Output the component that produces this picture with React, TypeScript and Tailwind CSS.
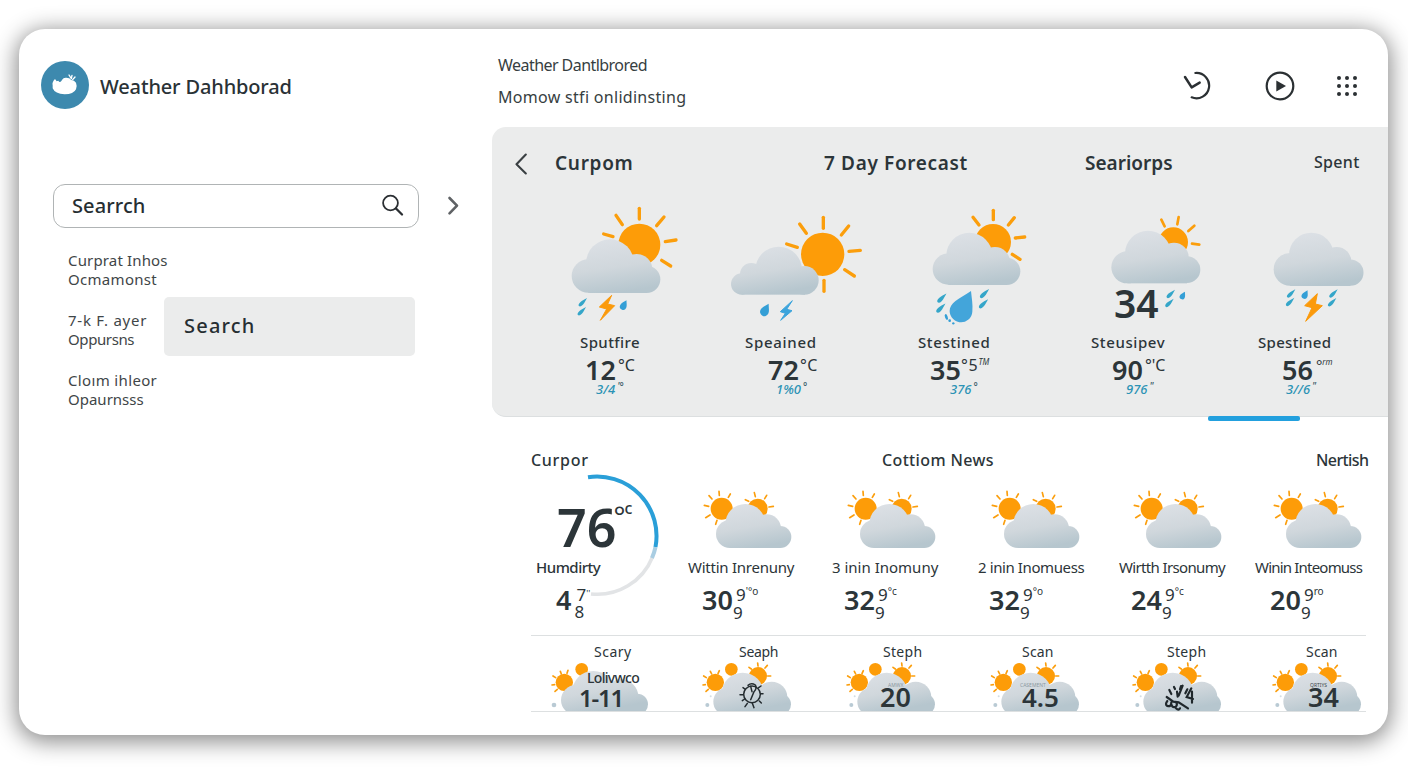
import React from "react";

type Circle = [number, number, number];
type Line = [number, number, number, number];

const Sun = ({ c, rays, w }: { c: Circle; rays: Line[]; w: number }) => (
  <g>
    <circle cx={c[0]} cy={c[1]} r={c[2]} fill="#fd9c08" />
    {rays.map((r, i) => (
      <line key={i} x1={r[0]} y1={r[1]} x2={r[2]} y2={r[3]} stroke="#fb9e0c" strokeWidth={w} strokeLinecap="round" />
    ))}
  </g>
);

const Cloud = ({ id, parts, base }: { id: string; parts: Circle[]; base: Line }) => {
  const top = Math.min(...parts.map((p) => p[1] - p[2]));
  return (
    <g fill={`url(#${id})`}>
      <linearGradient id={id} gradientUnits="userSpaceOnUse" x1={base[0]} y1={top} x2={base[0] + 25} y2={base[3] + 8}>
        <stop offset="0" stopColor="#dde1e6" />
        <stop offset="0.55" stopColor="#d0d7dc" />
        <stop offset="1" stopColor="#b6c6ce" />
      </linearGradient>
      {parts.map((p, i) => (
        <circle key={i} cx={p[0]} cy={p[1]} r={p[2]} />
      ))}
      <rect x={base[0]} y={base[1]} width={base[2] - base[0]} height={base[3] - base[1]} />
    </g>
  );
};

const Drop = ({ x, y, s, thin = false }: { x: number; y: number; s: number; thin?: boolean }) => (
  <path
    d="M0-1.8C.35-1.1 1-.4 1 .3A1 1 0 1 1-1 .3C-1-.4-.35-1.1 0-1.8Z"
    transform={`translate(${x} ${y}) rotate(${thin ? 45 : 28}) scale(${thin ? s * 0.5 : s} ${s})`}
    fill={thin ? "#35a6c9" : "#349fd6"}
  />
);

const Bolt = ({ points, color }: { points: string; color: string }) => (
  <polygon points={points} fill={color} stroke={color} strokeWidth="3" strokeLinejoin="round" />
);

const stormSun = (
  <>
    <Sun w={10} c={[268, 149, 63]} rays={[[268, 40, 268, 72], [198, 61, 217, 89], [342, 66, 320, 92], [161, 117, 189, 125], [346, 140, 378, 135], [335, 196, 362, 213]]} />
    <Cloud id="f1" parts={[[180, 205, 72], [115, 243, 50], [260, 224, 47], [290, 253, 41]]} base={[115, 235, 290, 294]} />
    <Bolt color="#fb9a0b" points="185,301 148,336 170,342 151,376 194,332 173,327" />
    <Drop thin x={97} y={323} s={11} />
    <Drop thin x={94} y={350} s={11} />
    <Drop x={221} y={332} s={10} />
  </>
);
const bigSun = (
  <>
    <Sun w={10} c={[818, 178, 65]} rays={[[820, 67, 820, 100], [749, 87, 769, 115], [896, 93, 874, 120], [710, 147, 742, 157], [897, 169, 931, 166], [884, 224, 913, 243], [822, 256, 822, 289]]} />
    <Cloud id="f2" parts={[[686, 225, 70], [604, 238, 34], [575, 267, 32], [763, 256, 43]]} base={[575, 240, 765, 299]} />
    <Drop x={645} y={347} s={13} />
    <Bolt color="#3ba4dc" points="727,317 691,350 706,355 692,376 726,347 710,343" />
  </>
);
const heavyDrop = (
  <>
    <Sun w={10} c={[279, 141, 54]} rays={[[280, 46, 280, 74], [219, 67, 237, 90], [343, 68, 325, 90], [346, 129, 374, 126], [337, 178, 360, 193]]} />
    <Cloud id="f3" parts={[[208, 182, 69], [145, 222, 47], [285, 201, 45], [320, 229, 41]]} base={[145, 215, 320, 270]} />
    <path d="M213 288C215 310 219 328 217 350A34 34 0 1 1 150 340C156 318 190 305 213 288Z" fill="#43a5da" />
    <Drop thin x={124} y={311} s={12} />
    <Drop thin x={121} y={341} s={12} />
    <Drop thin x={252} y={297} s={12} />
    <Drop thin x={249} y={328} s={12} />
    <ellipse cx="139" cy="366" rx="4" ry="9" transform="rotate(-20 139 366)" fill="#349fd6" />
    <circle cx="149" cy="377" r="4" fill="#349fd6" />
    <circle cx="160" cy="385" r="3.5" fill="#349fd6" />
  </>
);
const lightRain = (
  <>
    <Sun w={8} c={[820, 141, 44]} rays={[[784, 74, 794, 94], [836, 66, 832, 88], [883, 92, 865, 108], [876, 146, 898, 149]]} />
    <Cloud id="f4" parts={[[744, 176, 69], [682, 217, 48], [822, 187, 44], [861, 224, 40]]} base={[682, 210, 861, 265]} />
    <Drop thin x={811} y={298} s={11} />
    <Drop thin x={807} y={325} s={11} />
    <Drop x={848} y={303} s={8} />
  </>
);
const thunder = (
  <>
    <Cloud id="f5" parts={[[394, 180, 67], [330, 223, 49], [470, 200, 44], [511, 233, 39.5]]} base={[330, 215, 511, 273]} />
    <Drop thin x={332} y={297} s={11} />
    <Drop thin x={329} y={322} s={11} />
    <Drop thin x={459} y={297} s={11} />
    <Drop thin x={455} y={323} s={11} />
    <Drop x={375} y={300} s={9} />
    <Bolt color="#fb9a0b" points="412,296 374,332 396,338 377,379 427,332 406,327" />
  </>
);

const forecast = [
  { col: "w-[170px]", view: "-78 15 510 375", art: stormSun, name: "Sputfire", nameCls: "pl-[56px] tracking-[0.4px]", temp: "12", unit: "°C", unitCls: "text-[16px] pl-[2px]", tempPad: "pl-[61px]", sub: "3/4", subUnit: "'°", subPad: "pl-[72px]" },
  { col: "w-[174px]", view: "432 15 522 375", art: bigSun, name: "Speained", nameCls: "pl-[51px] tracking-[0.7px]", temp: "72", unit: "°C", unitCls: "text-[16px] pl-[1px] tracking-[0.5px]", tempPad: "pl-[74px]", sub: "1%0", subUnit: "°", subPad: "pl-[82px]" },
  { col: "w-[172px]", view: "-96 15 516 375", art: heavyDrop, name: "Stestined", nameCls: "pl-[50px] tracking-[0.6px]", temp: "35", unit: "°5", unitCls: "text-[16px] tracking-[0.8px]", tiny: "TM", tempPad: "pl-[62px]", sub: "376", subUnit: "°", subPad: "pl-[82px]" },
  { col: "w-[176px]", view: "420 15 528 375", art: lightRain, name: "Steusipev", nameCls: "pl-[51px] tracking-[0.6px]", temp: "90", unit: "°'C", unitCls: "text-[16px] pl-[2px]", tempPad: "pl-[72px]", sub: "976", subUnit: "\"", subPad: "pl-[86px]", big: "34" },
  { col: "w-[156px]", view: "108 15 468 375", art: thunder, name: "Spestined", nameCls: "pl-[42px] tracking-[0.3px]", temp: "56", unit: "°", unitCls: "text-[15px] pl-[3px]", tiny: "rm", tempPad: "pl-[66px]", sub: "3//6", subUnit: "\"", subPad: "pl-[70px]" },
];

const DuoArt = ({ id }: { id: string }) => (
  <svg viewBox="510 135 432 195" className="h-[65px] w-[144px] shrink-0">
    <Sun w={5} c={[635, 206, 33]} rays={[[627, 154, 628, 166], [661, 162, 655, 172], [597, 167, 606, 177], [583, 196, 596, 199], [587, 233, 600, 225], [621, 241, 617, 253]]} />
    <Sun w={5} c={[743, 206, 30]} rays={[[733, 158, 736, 170], [770, 166, 764, 176], [777, 201, 790, 199], [706, 179, 716, 184]]} />
    <Cloud id={id} parts={[[706, 252, 60], [660, 282, 42], [770, 266, 43], [811, 291, 33]]} base={[660, 270, 811, 324]} />
  </svg>
);

const hourly = [
  { col: "w-[144px]", name: "Wittin Inrenuny", nameCls: "pl-[8px] tracking-[-0.25px]", temp: "30", pad: "pl-[22px]", tiny: "'°o" },
  { col: "w-[144px]", name: "3 inin Inomuny", nameCls: "pl-[8px]", temp: "32", pad: "pl-[20px]", tiny: "°c" },
  { col: "w-[142px]", name: "2 inin Inomuess", nameCls: "pl-[10px] tracking-[-0.4px]", temp: "32", pad: "pl-[21px]", tiny: "°o" },
  { col: "w-[140px]", name: "Wirtth Irsonumy", nameCls: "pl-[9px] tracking-[-0.65px]", temp: "24", pad: "pl-[21px]", tiny: "°c" },
  { col: "w-[116px]", name: "Winin Inteomuss", nameCls: "pl-[5px] tracking-[-0.8px]", temp: "20", pad: "pl-[20px]", tiny: "ro" },
];

const MiniArt = ({ id, children }: { id: string; children?: React.ReactNode }) => (
  <svg viewBox="480 105 432 153" className="h-[51px] w-[144px] shrink-0">
    <circle cx="634" cy="133" r="19" fill="#fd9c08" />
    <Sun w={5} c={[586, 172, 26]} rays={[[571, 139, 575, 147], [598, 137, 594, 146], [551, 153, 559, 158], [549, 180, 556, 179], [558, 199, 565, 193]]} />
    <Sun w={5} c={[714, 153, 27]} rays={[[687, 127, 694, 132], [713, 114, 714, 123], [742, 121, 735, 129], [743, 153, 752, 153]]} />
    <circle cx="562" cy="240" r="6" fill="#b9cad4" />
    <circle cx="572" cy="214" r="3" fill="#d3dde3" />
    <Cloud id={id} parts={[[668, 206, 63], [622, 230, 42], [755, 217, 47], [781, 238, 32]]} base={[600, 225, 790, 262]} />
    {children}
  </svg>
);

const StormMini = () => (
  <svg viewBox="33 105 447 153" className="h-[51px] w-[149px] shrink-0">
    <circle cx="185" cy="133" r="19" fill="#fd9c08" />
    <Sun w={5} c={[133, 172, 26]} rays={[[121, 139, 124, 147], [144, 136, 141, 145], [99, 153, 107, 158], [96, 180, 104, 179], [105, 199, 112, 193]]} />
    <circle cx="102" cy="240" r="7" fill="#b9cad4" />
    <Cloud id="m1" parts={[[220, 202, 64], [168, 225, 45], [303, 215, 52], [352, 238, 32]]} base={[150, 225, 360, 262]} />
  </svg>
);

const gearMark = (
  <g fill="none" stroke="#232b2f" strokeWidth="4.5" strokeLinecap="round">
    <ellipse cx="696" cy="208" rx="25" ry="25" />
    <path d="M684 181Q694 172 706 180Q712 190 702 200L692 224M692 184L696 200M669 188L676 193M660 209H670M667 227L674 222M682 235L675 245M697 235L702 248M718 228L724 234M722 206H729M716 188L723 183" />
  </g>
);
const scribbleMark = (
  <g transform="translate(30 0)" fill="none" stroke="#1f272b" strokeWidth="6.5" strokeLinecap="round">
    <path d="M628 195L634 207M642 186L645 192M651 200L653 215M668 182L656 212M663 183L660 193M682 193L676 205M694 190L680 216L699 222M696 200V233" />
    <path d="M620 216L640 230L656 232L684 250M622 228Q614 238 622 243Q634 246 634 232M634 238Q636 248 646 246Q654 240 648 232M648 250Q656 258 660 250" />
  </g>
);

const minis = [
  { col: "w-[149px]", name: "Scary", pad: "pl-[63px] tracking-[0.5px]" },
  { col: "w-[144px]", name: "Seaph", pad: "pl-[59px] tracking-[-0.3px]" },
  { col: "w-[144px]", name: "Steph", pad: "pl-[59px] tracking-[0.3px]", value: "20", valueCls: "left-[56px] text-[27px]", tiny: "AMWX", tinyCls: "left-[64px] text-[#8b989f]" },
  { col: "w-[142px]", name: "Scan", pad: "pl-[54px] tracking-[0.2px]", value: "4.5", valueCls: "left-[54px] text-[26px]", tiny: "CASEMENT", tinyCls: "left-[52px] text-[#8b989f]" },
  { col: "w-[140px]", name: "Steph", pad: "pl-[57px] tracking-[0.3px]" },
  { col: "w-[116px]", name: "Scan", pad: "pl-[56px] tracking-[0.2px]", value: "34", valueCls: "left-[58px] text-[27px]", tiny: "QRTIYS", tinyCls: "left-[60px] text-[#3c474d]" },
];

const Sidebar = () => (
  <aside className="w-[473px] shrink-0 pt-[32px]">
    <div className="flex h-[48px] items-center gap-[11px] pl-[22px]">
      <svg viewBox="0 0 144 144" className="size-[48px]">
        <circle cx="72" cy="72" r="72" fill="#3d89ae" />
        <path d="M35 73C33 67 36 60 42 54L47 61L52 59Q56 66 61 60Q66 49 76 50Q86 50 91 57Q100 58 105 65Q109 74 105 85Q98 100 71 100Q42 99 35 82Z" fill="#fff" />
        <path d="M84 42L91 53M91 53L93 43M95 56L102 48" fill="none" stroke="#fff" strokeWidth="4" strokeLinecap="round" />
      </svg>
      <h1 className="pt-[3px] text-[20px] leading-[52px] font-medium tracking-[-0.15px] text-[#2a3236]">Weather Dahhborad</h1>
    </div>
    <div className="mt-[75px] flex items-center pl-[34px]">
      <div className="flex h-[44px] w-[366px] items-center justify-between rounded-[12px] border border-[#b0b4b5] pr-[14px] pl-[18px]">
        <span className="text-[20px] leading-[40px] font-medium tracking-[0.1px] text-[#262e32]">Searrch</span>
        <svg viewBox="0 0 24 24" className="size-[24px]" fill="none" stroke="#2b2f33" strokeLinecap="round">
          <circle cx="10.5" cy="9" r="7.4" strokeWidth="1.8" />
          <path d="M16 14.5L22 20.5" strokeWidth="2.3" />
        </svg>
      </div>
      <svg viewBox="0 0 12 20" className="ml-[28px] h-[20px] w-[12px]" fill="none" stroke="#5f6265" strokeWidth="2.6" strokeLinecap="round" strokeLinejoin="round">
        <path d="M2.5 2L10 9.7L2.5 17.4" />
      </svg>
    </div>
    <ul className="mt-[12px] pl-[49px] text-[15px] leading-[19px] text-[#3f4648]">
      <li className="flex h-[60px] flex-col justify-center">
        <span className="tracking-[0.15px]">Curprat Inhos</span>
        <span className="tracking-[0.3px]">Ocmamonst</span>
      </li>
      <li className="flex h-[60px] items-start">
        <div className="flex h-[60px] w-[96px] shrink-0 flex-col justify-center whitespace-nowrap">
          <span className="tracking-[0.75px]">7-k F. ayer</span>
          <span className="tracking-[-0.4px]">Oppursns</span>
        </div>
        <div className="-mt-[3px] h-[59px] w-[251px] rounded-[5px] bg-[#ebecec] pl-[20px] text-[20px] leading-[58px] font-medium tracking-[1.2px] text-[#262e32]">
          Search
        </div>
      </li>
      <li className="flex h-[60px] flex-col justify-center">
        <span className="tracking-[0.35px]">Cloım ihleor</span>
        <span>Opaurnsss</span>
      </li>
    </ul>
  </aside>
);

export default function App() {
  return (
    <div className="h-[768px] w-[1408px] overflow-hidden bg-white pt-[29px] pl-[19px] font-['Noto_Sans','Open_Sans',sans-serif] text-[#2c3539]">
      <div className="flex h-[706px] w-[1369px] overflow-hidden rounded-[26px] bg-white shadow-[0_4px_22px_3px_rgba(0,0,0,0.45)]">
        <Sidebar />
        <main className="w-[896px] shrink-0">
          <header className="flex h-[98px] justify-between pt-5">
            <div className="pl-[6px] text-[16px] leading-8 text-[#363e41]">
              <p className="tracking-[-0.55px]">Weather Dantlbrored</p>
              <p className="tracking-[0.3px]">Momow stfi onlidinsting</p>
            </div>
            <div className="flex h-[74px] items-center pr-[30px]">
              <svg viewBox="0 0 84 90" className="h-[30px] w-[28px]" fill="none" stroke="#2b3033" strokeWidth="6.5" strokeLinecap="round">
                <path d="M37 6A38 38 0 1 1 26 79" />
                <path d="M6 18L26 49L50 35" strokeLinejoin="round" strokeWidth="7.5" />
              </svg>
              <svg viewBox="0 0 30 30" className="ml-[54px] size-[30px]">
                <circle cx="15" cy="15" r="13.3" fill="none" stroke="#2b3033" strokeWidth="2.2" />
                <path d="M11.3 9.4V20.6L21 15Z" fill="#2b3033" />
              </svg>
              <svg viewBox="0 0 22 22" className="ml-[41px] size-[22px]" fill="#2b3033">
                {[3, 11, 19].map((x) => [3, 11, 19].map((y) => <circle key={`${x}-${y}`} cx={x} cy={y} r="2" />))}
              </svg>
            </div>
          </header>

          <section className="h-[290px] rounded-l-[14px] border-b border-[#dcdfe0] bg-[#ebecec]">
            <div className="flex h-[73px] items-center text-[19px] font-semibold">
              <svg viewBox="0 0 12 22" className="ml-[23px] h-[22px] w-[12px]" fill="none" stroke="#3b4144" strokeWidth="2.1" strokeLinecap="round" strokeLinejoin="round">
                <path d="M10.8 1.5L1.5 11.2L10.8 20.5" />
              </svg>
              <h2 className="-mt-px ml-[28px] w-[269px] tracking-[0.7px]">Curpom</h2>
              <h2 className="-mt-px w-[261px] tracking-[0.65px]">7 Day Forecast</h2>
              <h2 className="-mt-px w-[229px]">Seariorps</h2>
              <span className="-mt-[3px] text-[16px] font-medium tracking-[0.3px]">Spent</span>
            </div>
            <div className="flex pl-[32px]">
              {forecast.map((f, i) => (
                <div key={i} className={`${f.col} relative shrink-0 whitespace-nowrap`}>
                  <svg viewBox={f.view} className="block h-[125px] w-full overflow-visible">{f.art}</svg>
                  {f.big && <span className="absolute top-[83px] left-[74px] text-[39px] leading-[40px] font-semibold">{f.big}</span>}
                  <p className={`${f.nameCls} h-9 text-[15px] leading-[34px] font-medium`}>{f.name}</p>
                  <div className={`${f.tempPad} flex h-[18px] items-center`}>
                    <span className="text-[27px] leading-[16px] font-semibold">{f.temp}</span>
                    <span className={`${f.unitCls} mb-[11px] leading-[18px]`}>{f.unit}</span>
                    {f.tiny && <span className="mb-[16px] text-[8px] leading-[10px] italic">{f.tiny}</span>}
                  </div>
                  <div className={`${f.subPad} flex h-[22px] text-[13px] leading-[20px] font-medium text-[#2b93b5] italic`}>
                    <span>{f.sub}</span>
                    <span className="-mt-[3px] pl-[2px] text-[10px] text-[#3a5a66]">{f.subUnit}</span>
                  </div>
                </div>
              ))}
            </div>
          </section>
          <div className="relative -mt-px ml-[716px] h-[5px] w-[92px] rounded-[2px] bg-[#22a0de]" />

          <section className="ml-[39px] w-[835px] pt-[27px]">
            <div className="flex h-[25px] text-[16px] leading-6 font-medium whitespace-nowrap">
              <h3 className="w-[351px] shrink-0 tracking-[0.7px]">Curpor</h3>
              <h3 className="w-[434px] shrink-0 tracking-[0.35px]">Cottiom News</h3>
              <h3 className="tracking-[-0.6px]">Nertish</h3>
            </div>
            <div className="mt-3 flex">
              <div className="relative w-[149px] shrink-0">
                <svg viewBox="0 0 149 125" className="absolute -top-[12px] -left-px h-[125px] w-[149px]" fill="none" strokeWidth="4">
                  <path d="M122.5 84A59.5 59.5 0 0 1 61 121" stroke="#e2e4e6" strokeWidth="3.5" />
                  <path d="M125.5 74A59.5 59.5 0 0 1 122 85" stroke="#a9cde2" />
                  <path d="M58 4.2A59.5 59.5 0 0 1 125.5 74" stroke="#2a9fd8" />
                </svg>
                <div className="relative flex h-[65px] items-start pl-[26px]">
                  <span className="text-[52px] leading-[84px] font-semibold">76</span>
                  <span className="-ml-[3px] text-[28px] leading-[60px]">°</span>
                  <span className="-ml-px text-[16px] leading-[46px] font-medium">c</span>
                </div>
                <p className="relative h-9 pl-[5px] text-[15px] leading-[34px] font-medium tracking-[-0.5px]">Humdirty</p>
                <div className="relative flex h-[29px] items-center pl-[25px]">
                  <span className="text-[27px] font-semibold">4</span>
                  <span className="mt-[5px] flex flex-col pl-[3px] text-[17px] leading-[17px]">
                    <span className="pl-[2px]">7<sup className="text-[9px]">''</sup></span>
                    <span>8</span>
                  </span>
                </div>
              </div>
              {hourly.map((h, i) => (
                <div key={i} className={`${h.col} shrink-0 whitespace-nowrap`}>
                  <DuoArt id={`h${i}`} />
                  <p className={`${h.nameCls} h-9 text-[15px] leading-[34px]`}>{h.name}</p>
                  <div className={`${h.pad} flex h-[29px] items-center`}>
                    <span className="text-[27px] font-semibold">{h.temp}</span>
                    <div className="mt-[6px] flex flex-col text-[17px] leading-[18px]">
                      <div className="flex pl-[3px]">
                        <span>9</span>
                        <span className="-mt-[4px] text-[10px]">{h.tiny}</span>
                      </div>
                      <span>9</span>
                    </div>
                  </div>
                </div>
              ))}
            </div>
            <div className="mt-5 flex h-[77px] border-y border-[#dde0e1]">
              {minis.map((m, i) => (
                <div key={i} className={`${m.col} relative shrink-0 whitespace-nowrap`}>
                  <p className={`${m.pad} h-6 pt-[7px] text-[14px] leading-[17px]`}>{m.name}</p>
                  {i === 0 ? <StormMini /> : <MiniArt id={`n${i}`}>{i === 1 ? gearMark : i === 4 ? scribbleMark : null}</MiniArt>}
                  {i === 0 && <span className="absolute top-[33px] left-[56px] text-[14px] leading-[18px] font-medium tracking-[-0.7px]">Lolivwco</span>}
                  {i === 0 && <span className="absolute top-[49px] left-[48px] text-[24px] leading-[26px] font-semibold tracking-[-1.2px]">1-11</span>}
                  {m.value && <span className={`${m.valueCls} absolute top-[48px] leading-[26px] font-semibold`}>{m.value}</span>}
                  {m.tiny && <span className={`${m.tinyCls} absolute top-[45px] text-[5px] leading-[8px]`}>{m.tiny}</span>}
                </div>
              ))}
            </div>
          </section>
        </main>
      </div>
    </div>
  );
}
